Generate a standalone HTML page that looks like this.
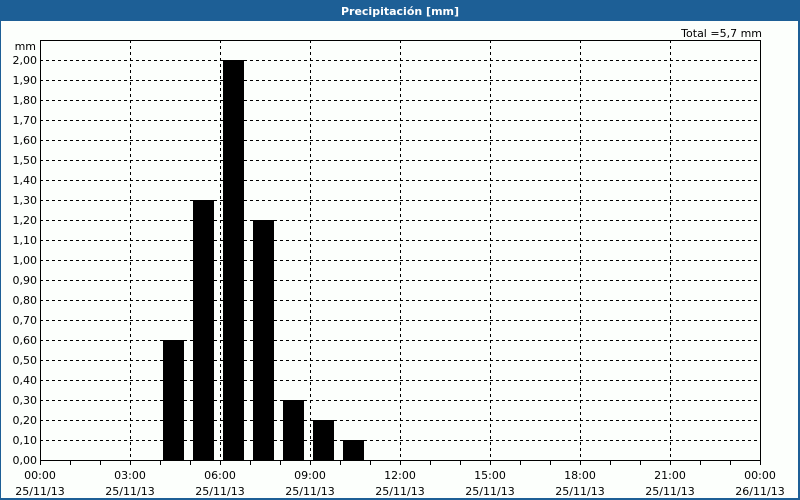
<!DOCTYPE html>
<html><head><meta charset="utf-8"><style>
html,body{margin:0;padding:0;background:#fff;}
svg{display:block;font-family:"DejaVu Sans","Liberation Sans",sans-serif;}
</style></head><body>
<svg width="800" height="500" viewBox="0 0 800 500" xmlns="http://www.w3.org/2000/svg">
<rect x="0" y="0" width="800" height="500" fill="#1d5f96"/>
<rect x="1" y="21" width="797" height="477" fill="#fcfffc"/>
<text x="400" y="15" fill="#fff" font-size="11" font-weight="bold" text-anchor="middle">Precipitación [mm]</text>
<text x="762" y="37" fill="#000" font-size="11" text-anchor="end">Total =5,7 mm</text>
<text x="36" y="50" fill="#000" font-size="11" text-anchor="end">mm</text>
<g stroke="#000" stroke-width="1" stroke-dasharray="3,3" fill="none">
<path d="M40 60.5H760M40 80.5H760M40 100.5H760M40 120.5H760M40 140.5H760M40 160.5H760M40 180.5H760M40 200.5H760M40 220.5H760M40 240.5H760M40 260.5H760M40 280.5H760M40 300.5H760M40 320.5H760M40 340.5H760M40 360.5H760M40 380.5H760M40 400.5H760M40 420.5H760M40 440.5H760"/>
<path d="M130.5 40V460M220.5 40V460M310.5 40V460M400.5 40V460M490.5 40V460M580.5 40V460M670.5 40V460"/>
</g>
<g fill="#000">
<rect x="163" y="340" width="21" height="120"/>
<rect x="193" y="200" width="21" height="260"/>
<rect x="223" y="60" width="21" height="400"/>
<rect x="253" y="220" width="21" height="240"/>
<rect x="283" y="400" width="21" height="60"/>
<rect x="313" y="420" width="21" height="40"/>
<rect x="343" y="440" width="21" height="20"/>
</g>
<rect x="40.5" y="40.5" width="720" height="420" fill="none" stroke="#000"/>
<g stroke="#000">
<path d="M70.5 460V465M100.5 460V465M130.5 460V465M160.5 460V465M190.5 460V465M220.5 460V465M250.5 460V465M280.5 460V465M310.5 460V465M340.5 460V465M370.5 460V465M400.5 460V465M430.5 460V465M460.5 460V465M490.5 460V465M520.5 460V465M550.5 460V465M580.5 460V465M610.5 460V465M640.5 460V465M670.5 460V465M700.5 460V465M730.5 460V465M40.5 460V465M760.5 460V465"/>
</g>
<g font-size="11" fill="#000" text-anchor="end">
<text x="37" y="64">2,00</text><text x="37" y="84">1,90</text><text x="37" y="104">1,80</text><text x="37" y="124">1,70</text><text x="37" y="144">1,60</text><text x="37" y="164">1,50</text><text x="37" y="184">1,40</text><text x="37" y="204">1,30</text><text x="37" y="224">1,20</text><text x="37" y="244">1,10</text><text x="37" y="264">1,00</text><text x="37" y="284">0,90</text><text x="37" y="304">0,80</text><text x="37" y="324">0,70</text><text x="37" y="344">0,60</text><text x="37" y="364">0,50</text><text x="37" y="384">0,40</text><text x="37" y="404">0,30</text><text x="37" y="424">0,20</text><text x="37" y="444">0,10</text><text x="37" y="464">0,00</text>
</g>
<g font-size="11" fill="#000" text-anchor="middle">
<text x="40" y="479">00:00</text><text x="40" y="495">25/11/13</text>
<text x="130" y="479">03:00</text><text x="130" y="495">25/11/13</text>
<text x="220" y="479">06:00</text><text x="220" y="495">25/11/13</text>
<text x="310" y="479">09:00</text><text x="310" y="495">25/11/13</text>
<text x="400" y="479">12:00</text><text x="400" y="495">25/11/13</text>
<text x="490" y="479">15:00</text><text x="490" y="495">25/11/13</text>
<text x="580" y="479">18:00</text><text x="580" y="495">25/11/13</text>
<text x="670" y="479">21:00</text><text x="670" y="495">25/11/13</text>
<text x="760" y="479">00:00</text><text x="760" y="495">26/11/13</text>
</g>
</svg>
</body></html>
